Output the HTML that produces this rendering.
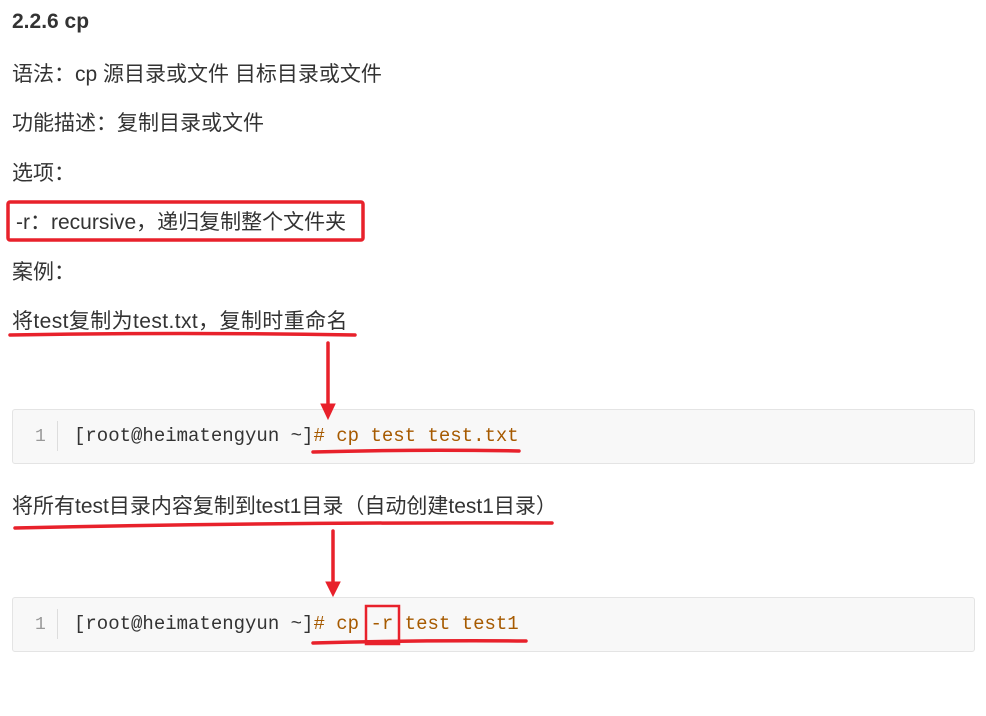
<!DOCTYPE html>
<html><head><meta charset="utf-8"><style>
body{margin:0;width:986px;height:716px;background:#fff;position:relative;overflow:hidden;font-family:"Liberation Sans","Noto Sans CJK SC",sans-serif;color:#333;}
.t{position:absolute;left:12px;font-size:21px;line-height:26px;white-space:nowrap;}
.l{letter-spacing:0.4px;}
.h{position:absolute;left:12px;top:9px;font-size:21px;font-weight:bold;line-height:26px;}
.code{position:absolute;left:12px;width:961px;height:53px;background:#f8f8f8;border:1px solid #e4e4e4;border-radius:3px;}
.ln{position:absolute;left:22px;top:15px;font-family:"Liberation Mono",monospace;font-size:18px;line-height:24px;color:#999;}
.dv{position:absolute;left:44px;top:11px;width:1px;height:30px;background:#ddd;}
.cd{position:absolute;left:61px;top:14px;font-family:"Liberation Mono",monospace;font-size:19px;line-height:24px;color:#333;white-space:pre;}
.o{color:#a65a00;}
svg{position:absolute;left:0;top:0;}
</style></head><body>
<div class="h">2.2.6 cp</div>
<div class="t" style="top:62px">语法：cp 源目录或文件 目标目录或文件</div>
<div class="t" style="top:111px">功能描述：复制目录或文件</div>
<div class="t" style="top:161px">选项：</div>
<div class="t" style="top:210px;left:16px">-r：recursive，递归复制整个文件夹</div>
<div class="t" style="top:260px">案例：</div>
<div class="t l" style="top:309px">将test复制为test.txt，复制时重命名</div>
<div class="code" style="top:409px"><div class="ln">1</div><div class="dv"></div><div class="cd">[root@heimatengyun ~]<span class="o"># cp test test.txt</span></div></div>
<div class="t" style="top:494px">将所有test目录内容复制到test1目录（自动创建test1目录）</div>
<div class="code" style="top:597px"><div class="ln">1</div><div class="dv"></div><div class="cd">[root@heimatengyun ~]<span class="o"># cp -r test test1</span></div></div>
<svg width="986" height="716" fill="none" stroke="#e8212b" stroke-linecap="round">
<rect x="8" y="202" width="355" height="38" rx="2" stroke-width="3.5"/>
<path d="M10 335 Q180 332 355 335" stroke-width="3.5"/>
<path d="M328 343 L328 408" stroke-width="3.5"/>
<path d="M321 404 L335 404 L328 419Z" fill="#e8212b" stroke-width="1"/>
<path d="M313 452 Q420 449 519 451" stroke-width="3.5"/>
<path d="M15 528 Q280 522 552 523" stroke-width="3.5"/>
<path d="M333 531 L333 583" stroke-width="3.5"/>
<path d="M326 582 L340 582 L333 596Z" fill="#e8212b" stroke-width="1"/>
<rect x="366" y="606" width="33" height="38" stroke-width="2.5"/>
<path d="M313 643 Q420 640 526 641" stroke-width="3.5"/>
</svg>
</body></html>
